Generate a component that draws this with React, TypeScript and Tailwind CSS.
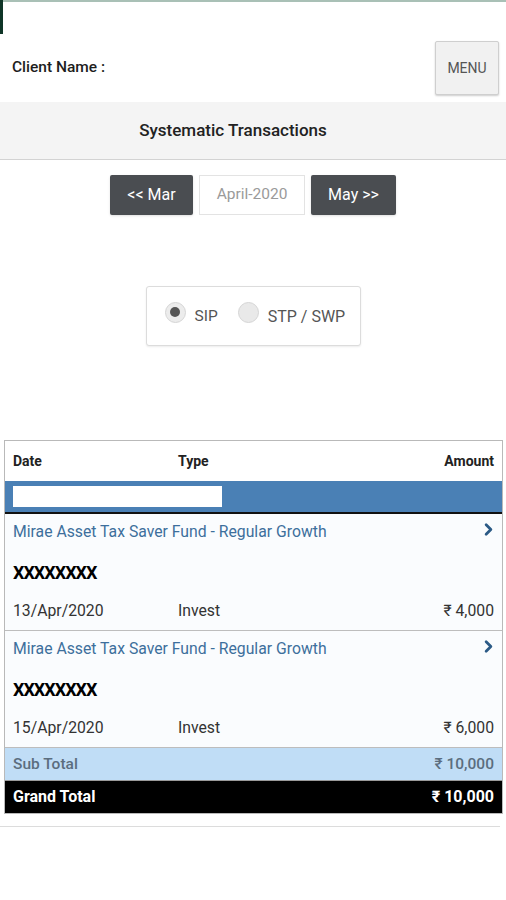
import React, { useState } from "react";
import { ChevronRight } from "lucide-react";

const rows = [
  { fund: "Mirae Asset Tax Saver Fund - Regular Growth", date: "13/Apr/2020", type: "Invest", amount: "₹ 4,000" },
  { fund: "Mirae Asset Tax Saver Fund - Regular Growth", date: "15/Apr/2020", type: "Invest", amount: "₹ 6,000" },
];

const App = () => {
  const [mode, setMode] = useState("sip");

  return (
    <div className="w-full bg-white font-['Roboto','Liberation_Sans',sans-serif] text-[#222]">
      {/* top strip */}
      <div className="relative border-t-2 border-[#a9c0b6]">
        <div className="absolute left-0 top-[-2px] h-[34px] w-[3px] bg-[#0f3527]" />
        <div className="flex items-center justify-between pl-[12px] pr-[7px] pt-[39px] pb-[7px]">
          <p className="text-[15.5px] font-medium text-[#1d1d1d]">Client Name :</p>
          <button className="h-[54px] w-[64px] rounded-[2px] border border-[#cfcfcf] bg-[#f1f1f1] text-[14px] text-[#555] shadow-[0_1px_2px_rgba(0,0,0,0.2)]">
            MENU
          </button>
        </div>
      </div>

      <div className="flex h-[58px] items-center justify-center border-b border-[#d3d3d3] bg-[#f4f4f4] pr-[40px]">
        <h1 className="text-[17px] font-medium text-[#222]">Systematic Transactions</h1>
      </div>

      <div className="mt-[15px] flex justify-center gap-[6px]">
        <button className="h-[40px] w-[83px] rounded-[2px] bg-[#4a4d51] text-[16px] text-white shadow-sm">
          &lt;&lt; Mar
        </button>
        <div className="flex h-[40px] w-[106px] items-center justify-center border border-[#e3e3e3] bg-white text-[15.5px] text-[#9a9a9a]">
          April-2020
        </div>
        <button className="h-[40px] w-[85px] rounded-[2px] bg-[#4a4d51] text-[16px] text-white shadow-sm">
          May &gt;&gt;
        </button>
      </div>

      <div className="mt-[71px] flex justify-center">
        <div className="flex h-[60px] w-[215px] items-center gap-[20px] rounded-[3px] border border-[#dcdcdc] bg-white pl-[18px] shadow-[0_1px_2px_rgba(0,0,0,0.08)]">
          <label className="flex cursor-pointer items-center gap-[9px]" onClick={() => setMode("sip")}>
            <span className="mt-[-8px] flex h-[21px] w-[21px] items-center justify-center rounded-full border border-[#d5d5d5] bg-[#ececec]">
              {mode === "sip" && <span className="h-[10px] w-[10px] rounded-full bg-[#555]" />}
            </span>
            <span className="mt-[2px] text-[15.5px] text-[#555]">SIP</span>
          </label>
          <label className="flex cursor-pointer items-center gap-[9px]" onClick={() => setMode("stp")}>
            <span className="mt-[-8px] flex h-[21px] w-[21px] items-center justify-center rounded-full border border-[#d5d5d5] bg-[#e9e9e9]">
              {mode === "stp" && <span className="h-[10px] w-[10px] rounded-full bg-[#555]" />}
            </span>
            <span className="mt-[2px] text-[16px] text-[#555]">STP / SWP</span>
          </label>
        </div>
      </div>

      <div className="ml-[4px] mr-[3px] mt-[94px] border border-[#b9b9b9]">
        <div className="grid h-[40px] grid-cols-[165px_1fr_auto] items-center px-[8px] text-[14px] font-bold text-[#222]">
          <span>Date</span>
          <span>Type</span>
          <span>Amount</span>
        </div>
        <div className="flex h-[33px] items-center border-b-2 border-[#111] bg-[#4a80b5] pl-[8px]">
          <input className="h-[21px] w-[209px] bg-white px-1 text-[13px] outline-none" />
        </div>

        {rows.map((r, i) => (
          <div key={i} className="border-b border-[#bdbdbd] bg-[#fafcfe] px-[8px] pt-[8px] pb-[11px]">
            <div className="flex h-[20px] items-center justify-between">
              <span className="text-[15.75px] text-[#3d6f9c]">{r.fund}</span>
              <ChevronRight size={19} strokeWidth={3.5} className="mr-[-4px] mt-[-6px] text-[#2b5a86]" />
            </div>
            <div className="mt-[20px] h-[22px] text-[18px] font-bold leading-[22px] tracking-[-1px] text-black">
              XXXXXXXX
            </div>
            <div className="mt-[15px] grid h-[20px] grid-cols-[165px_1fr_auto] items-center text-[15.75px] text-[#333]">
              <span>{r.date}</span>
              <span>{r.type}</span>
              <span>{r.amount}</span>
            </div>
          </div>
        ))}

        <div className="flex h-[33px] items-center justify-between border-b border-[#9a9a9a] bg-[#c0ddf6] px-[8px] pt-[2px] text-[15.5px] font-medium text-[#5b6d7e]">
          <span>Sub Total</span>
          <span>₹ 10,000</span>
        </div>
        <div className="flex h-[32px] items-center justify-between bg-black px-[8px] text-[16px] font-bold text-white">
          <span>Grand Total</span>
          <span>₹ 10,000</span>
        </div>
      </div>

      <div className="mr-[6px] mt-[12px] border-t border-[#dcdcdc]" />
      <div className="h-[72px]" />
    </div>
  );
};

export default App;
